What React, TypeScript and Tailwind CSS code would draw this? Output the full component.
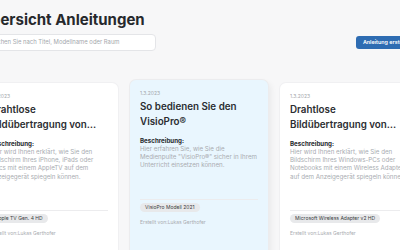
type Guide = {
  date: string;
  title: string;
  description: string;
  device: string;
  author: string;
  active?: boolean;
};

const guides: Guide[] = [
  {
    date: "1.3.2023",
    title: "Drahtlose Bildübertragung von Apple-Geräten",
    description:
      "Hier wird Ihnen erklärt, wie Sie den Bildschirm Ihres iPhone, iPads oder Macs mit einem AppleTV auf dem Anzeigegerät spiegeln können.",
    device: "Apple TV Gen. 4 HD",
    author: "Lukas Gerthofer",
  },
  {
    date: "1.3.2023",
    title: "So bedienen Sie den VisioPro®",
    description:
      "Hier erfahren Sie, wie Sie die Medienpulte \"VisioPro®\" sicher in Ihrem Unterricht einsetzen können.",
    device: "VisioPro Modell 2021",
    author: "Lukas Gerthofer",
    active: true,
  },
  {
    date: "1.3.2023",
    title: "Drahtlose Bildübertragung von Windows-Geräten",
    description:
      "Hier wird Ihnen erklärt, wie Sie den Bildschirm Ihres Windows-PCs oder Notebooks mit einem Wireless Adapter auf dem Anzeigegerät spiegeln können.",
    device: "Microsoft Wireless Adapter v2 HD",
    author: "Lukas Gerthofer",
  },
];

function GuideCard({ guide }: { guide: Guide }) {
  return (
    <div
      className={`flex h-[190px] w-[138px] shrink-0 flex-col rounded-[6px] px-[10px] pt-[10px] ${
        guide.active
          ? "-translate-y-[3px] bg-[#e9f6fe] shadow-[0_0_0_1px_#ececee,3px_3px_6px_rgba(0,0,0,0.06)]"
          : "bg-white shadow-[0_0_0_1px_#f0f0f2]"
      }`}
    >
      <p className="text-[5px] leading-[6px] text-[#a4a7ac]">{guide.date}</p>
      <h2 className="mt-[3px] line-clamp-2 text-[9.8px] font-semibold leading-[15px] text-[#2b2d31]">
        {guide.title}
      </h2>
      <p className="mt-[8px] text-[6.2px] font-bold leading-[8px] text-[#26282c]">
        Beschreibung:
      </p>
      <p className="text-[6.2px] leading-[8.2px] text-[#a9acb1]">
        {guide.description}
      </p>
      <div className="mt-[29px] flex flex-col items-start border-t border-[#ececee] pt-[3px]">
        <span className="rounded-full bg-[#e8e9eb] px-[5px] py-[1.5px] text-[5px] leading-[6px] text-[#3a3c40]">
          {guide.device}
        </span>
        <p className="mt-[7px] text-[5px] leading-[6px] text-[#a9acb1]">
          Erstellt von:{guide.author}
        </p>
      </div>
    </div>
  );
}

export default function App() {
  return (
    <div className="h-[250px] w-[400px] overflow-hidden bg-[#f7f7f8] font-['Inter',sans-serif]">
      <div className="-ml-[20px] w-[440px] pt-[11px]">
        <h1 className="text-[15px] font-bold leading-[18px] text-[#26282c]">
          Übersicht Anleitungen
        </h1>
        <div className="mt-[5px] flex items-center justify-between">
          <div className="flex h-[17px] w-[176px] items-center rounded-[4px] border border-[#e4e5e8] bg-white pl-[9px]">
            <span className="whitespace-nowrap text-[5.9px] text-[#a4a7ac]">
              Suchen Sie nach Titel, Modellname oder Raum
            </span>
          </div>
          <button
            type="button"
            className="mr-[1px] h-[13px] whitespace-nowrap rounded-[3px] bg-[#2e6cb2] px-[7px] text-[5.4px] font-semibold leading-[13px] text-white"
          >
            Anleitung erstellen
          </button>
        </div>
        <div className="mt-[32px] flex items-start gap-3">
          {guides.map((g, i) => (
            <GuideCard key={i} guide={g} />
          ))}
        </div>
      </div>
    </div>
  );
}
